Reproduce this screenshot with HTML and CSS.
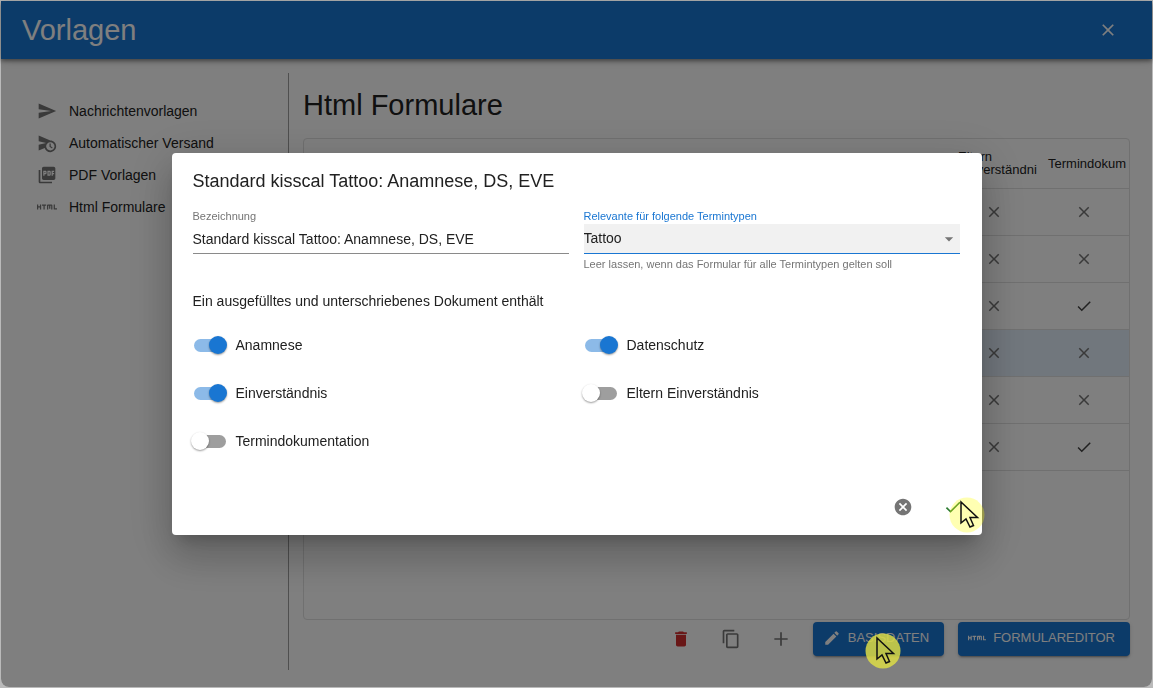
FILE: index.html
```html
<!DOCTYPE html>
<html lang="de">
<head>
<meta charset="utf-8">
<title>Vorlagen</title>
<link rel="stylesheet" href="styles.css">
</head>
<body>
<svg class="defs" aria-hidden="true">
  <symbol id="x" viewBox="0 0 24 24"><path d="M19 6.41 17.59 5 12 10.59 6.41 5 5 6.41 10.59 12 5 17.59 6.41 19 12 13.41 17.59 19 19 17.59 13.41 12z"/></symbol>
  <symbol id="check" viewBox="0 0 24 24"><path d="M9 16.17 4.83 12l-1.42 1.41L9 19 21 7l-1.41-1.41z"/></symbol>
  <symbol id="html" viewBox="0 0 24 24"><path d="M3.500 9H5v6H3.500v-2.500h-2V15H0V9h1.500v2h2V9zm14 0H13c-.55 0-1 .45-1 1v5h1.500v-4.500h1V14H16v-3.510h1V15h1.500v-5c0-.55-.45-1-1-1zM11 9H6v1.500h1.750V15h1.500v-4.500H11V9zm13 6v-1.500h-2.500V9H20v6h4z"/></symbol>
  <symbol id="pointer" viewBox="0 0 36 36"><circle class="halo" cx="18" cy="18" r="17.500"/><path class="arrow" d="M12 5v21l5-4 4 8 3.500-1.500-3.500-8h7.500z"/></symbol>
</svg>

<div class="window">
  <header class="bar">
    <h1 class="bar-title">Vorlagen</h1>
    <button class="icon-btn" aria-label="Schließen"><svg class="icon"><use href="#x"/></svg></button>
  </header>

  <div class="body">
    <nav class="nav">
      <a class="nav-link" href="#"><svg class="icon" viewBox="0 0 24 24"><path d="M2.010 21 23 12 2.010 3 2 10l15 2-15 2z"/></svg>Nachrichtenvorlagen</a>
      <a class="nav-link" href="#"><svg class="icon" viewBox="0 0 24 24"><path d="M16.500 12.500H15v4l3 2 .75-1.230-2.250-1.520V12.500zM16 9 2 3v7l9 2-9 2v7l7.270-3.110C10.090 20.830 12.790 23 16 23c3.860 0 7-3.140 7-7s-3.140-7-7-7zm0 12c-2.750 0-4.980-2.220-5-4.970v-.07c.02-2.740 2.250-4.970 5-4.970 2.760 0 5 2.240 5 5S18.760 21 16 21z"/></svg>Automatischer Versand</a>
      <a class="nav-link" href="#"><svg class="icon" viewBox="0 0 24 24"><path d="M20 2H8c-1.100 0-2 .9-2 2v12c0 1.100.9 2 2 2h12c1.100 0 2-.9 2-2V4c0-1.100-.9-2-2-2zm-8.500 7.500c0 .83-.67 1.500-1.500 1.500H9v2H7.500V7H10c.83 0 1.500.67 1.500 1.500v1zm5 2c0 .83-.67 1.500-1.500 1.500h-2.500V7H15c.83 0 1.500.67 1.500 1.500v3zm4-3H19v1h1.500V11H19v2h-1.500V7h3v1.500zM9 9.500h1v-1H9v1zM4 6H2v14c0 1.100.9 2 2 2h14v-2H4V6zm10 5.500h1v-3h-1v3z"/></svg>PDF Vorlagen</a>
      <a class="nav-link" href="#"><svg class="icon"><use href="#html"/></svg>Html Formulare</a>
    </nav>

    <main class="main">
      <h2 class="heading">Html Formulare</h2>
      <div class="grid">
        <table class="table">
          <colgroup><col><col class="col-flag"><col class="col-flag"></colgroup>
          <thead><tr><td></td><th scope="col">Eltern Einverständni</th><th scope="col">Termindokum</th></tr></thead>
          <tbody>
            <tr><td></td><td><svg class="icon"><use href="#x"/></svg></td><td><svg class="icon"><use href="#x"/></svg></td></tr>
            <tr><td></td><td><svg class="icon"><use href="#x"/></svg></td><td><svg class="icon"><use href="#x"/></svg></td></tr>
            <tr><td></td><td><svg class="icon"><use href="#x"/></svg></td><td><svg class="icon yes"><use href="#check"/></svg></td></tr>
            <tr class="selected"><td></td><td><svg class="icon"><use href="#x"/></svg></td><td><svg class="icon"><use href="#x"/></svg></td></tr>
            <tr><td></td><td><svg class="icon"><use href="#x"/></svg></td><td><svg class="icon"><use href="#x"/></svg></td></tr>
            <tr><td></td><td><svg class="icon"><use href="#x"/></svg></td><td><svg class="icon yes"><use href="#check"/></svg></td></tr>
          </tbody>
        </table>
      </div>
      <div class="actions">
        <button class="icon-btn" aria-label="Löschen"><svg class="icon danger" viewBox="0 0 24 24"><path d="M6 19c0 1.100.9 2 2 2h8c1.100 0 2-.9 2-2V7H6v12zM19 4h-3.500l-1-1h-5l-1 1H5v2h14V4z"/></svg></button>
        <button class="icon-btn" aria-label="Kopieren"><svg class="icon" viewBox="0 0 24 24"><path d="M16 1H4c-1.100 0-2 .9-2 2v14h2V3h12V1zm3 4H8c-1.100 0-2 .9-2 2v14c0 1.100.9 2 2 2h11c1.100 0 2-.9 2-2V7c0-1.100-.9-2-2-2zm0 16H8V7h11v14z"/></svg></button>
        <button class="icon-btn" aria-label="Hinzufügen"><svg class="icon" viewBox="0 0 24 24"><path d="M20 13h-7v7h-2v-7H4v-2h7V4h2v7h7v2z"/></svg></button>
        <button class="btn"><svg class="icon" viewBox="0 0 24 24"><path d="M3 17.250V21h3.750L17.810 9.940l-3.750-3.750L3 17.250zM20.710 7.040c.39-.39.39-1.020 0-1.410l-2.340-2.340a1 1 0 0 0-1.410 0l-1.830 1.830 3.750 3.750 1.830-1.830z"/></svg>BASISDATEN<svg class="pointer solid"><use href="#pointer"/></svg></button>
        <button class="btn"><svg class="icon"><use href="#html"/></svg>FORMULAREDITOR</button>
      </div>
    </main>
  </div>
</div>

<div class="backdrop">
  <form class="dialog" role="dialog" aria-labelledby="dialog-title">
    <h2 class="dialog-title" id="dialog-title">Standard kisscal Tattoo: Anamnese, DS, EVE</h2>
    <div class="columns">
      <div class="field">
        <label class="label" for="name">Bezeichnung</label>
        <input class="control" id="name" type="text" value="Standard kisscal Tattoo: Anamnese, DS, EVE">
      </div>
      <div class="field focused">
        <label class="label" for="type">Relevante für folgende Termintypen</label>
        <div class="select-wrap">
          <select class="control" id="type"><option>Tattoo</option></select>
          <svg class="caret" viewBox="0 0 24 24"><path d="m7 10 5 5 5-5z"/></svg>
        </div>
        <p class="hint">Leer lassen, wenn das Formular für alle Termintypen gelten soll</p>
      </div>
    </div>
    <p class="intro">Ein ausgefülltes und unterschriebenes Dokument enthält</p>
    <div class="columns switches">
      <label class="switch"><input class="toggle" type="checkbox" checked>Anamnese</label>
      <label class="switch"><input class="toggle" type="checkbox" checked>Datenschutz</label>
      <label class="switch"><input class="toggle" type="checkbox" checked>Einverständnis</label>
      <label class="switch"><input class="toggle" type="checkbox">Eltern Einverständnis</label>
      <label class="switch"><input class="toggle" type="checkbox">Termindokumentation</label>
    </div>
    <div class="dialog-actions">
      <button class="icon-btn" type="button" aria-label="Abbrechen"><svg class="icon" viewBox="0 0 24 24"><path d="M12 2C6.470 2 2 6.470 2 12s4.470 10 10 10 10-4.470 10-10S17.530 2 12 2zm5 13.590L15.590 17 12 13.410 8.410 17 7 15.590 10.590 12 7 8.410 8.410 7 12 10.590 15.590 7 17 8.410 13.410 12 17 15.590z"/></svg></button>
      <button class="icon-btn" type="button" aria-label="Speichern"><svg class="icon success"><use href="#check"/></svg><svg class="pointer"><use href="#pointer"/></svg></button>
    </div>
  </form>
</div>
</body>
</html>
```

FILE: styles.css
```css
* { box-sizing: border-box; }

body {
  margin: 0;
  min-height: 100vh;
  display: flex;
  padding: 1px;
  background: #bababa;
  font: 14px/20px "Liberation Sans", Arial, sans-serif;
  color: #212121;
}

h1, h2, p { margin: 0; font-weight: 400; }
button { border: 0; background: none; padding: 0; font: inherit; color: inherit; }

.defs { position: absolute; width: 0; height: 0; }

.icon { width: 20px; height: 20px; flex: none; fill: #757575; }
.icon.danger { fill: #d32f2f; }
.icon.success { fill: #2e7d32; }

.icon-btn { position: relative; display: flex; padding: 8px; }

.window {
  flex: 1;
  display: flex;
  flex-direction: column;
  background: #fff;
  border-radius: 0 0 8px 8px;
}

.bar {
  display: flex;
  align-items: center;
  justify-content: space-between;
  height: 58px;
  padding: 0 26px 0 21px;
  background: #1976d2;
  color: #fff;
  box-shadow: 0 2px 4px rgba(0, 0, 0, .4), 0 1px 10px rgba(0, 0, 0, .2);
}
.bar-title { font-size: 29px; line-height: 34px; }
.bar .icon { fill: #fff; }

.body { flex: 1; display: flex; padding: 14px 22px 17px 0; }

.nav {
  width: 288px;
  padding: 28px 0 0 36px;
  border-right: 1px solid #9e9e9e;
  display: flex;
  flex-direction: column;
  gap: 12px;
}
.nav-link {
  display: flex;
  align-items: center;
  gap: 12px;
  color: #212121;
  text-decoration: none;
}

.main { flex: 1; min-width: 0; display: flex; flex-direction: column; padding: 15px 0 14px 14px; }
.heading { font-size: 29px; line-height: 34px; }

.grid {
  flex: 1;
  margin-top: 16px;
  border: 1px solid #e0e0e0;
  border-radius: 4px;
}
.table { width: 100%; border-collapse: collapse; table-layout: fixed; }
.col-flag { width: 90px; }
.table td, .table th {
  height: 47px;
  padding: 0;
  border-bottom: 1px solid #e0e0e0;
  text-align: center;
  vertical-align: middle;
}
.table thead th, .table thead td {
  height: 49px;
  padding: 0 0 0 9px;
  font-size: 13px;
  line-height: 13px;
  font-weight: 400;
  text-align: left;
}
.table .icon { display: block; width: 18px; height: 18px; margin: 0 auto; }
.table .icon.yes { fill: #424242; }
.selected { background: #e3eefa; }

.actions { display: flex; justify-content: flex-end; align-items: center; gap: 14px; height: 36px; padding-top: 2px; }
.btn {
  position: relative;
  display: flex;
  align-items: center;
  gap: 7px;
  height: 34px;
  padding: 0 15px 2px 10px;
  border-radius: 4px;
  background: #1976d2;
  color: #fff;
  font-size: 13px;
  box-shadow: 0 3px 1px -2px rgba(0, 0, 0, .2), 0 2px 2px rgba(0, 0, 0, .14), 0 1px 5px rgba(0, 0, 0, .12);
}
.btn .icon { width: 18px; height: 18px; fill: #fff; }

/* Click highlight drawn above the backdrop */
.pointer {
  position: absolute;
  z-index: 20;
  left: 14px;
  top: 8px;
  width: 36px;
  height: 36px;
  fill: rgba(255, 255, 0, .3);
}
.pointer.solid { left: 52px; top: 11px; fill: rgba(220, 220, 70, .85); }
.arrow { fill: none; stroke: #111; stroke-width: 1.5; }

.backdrop {
  position: fixed;
  z-index: 10;
  inset: 1px;
  border-radius: 0 0 8px 8px;
  display: flex;
  align-items: center;
  justify-content: center;
  background: rgba(0, 0, 0, .5);
}

.dialog {
  width: 100%;
  max-width: 810px;
  padding: 18px 22px 10px 21px;
  border-radius: 4px;
  background: #fff;
  box-shadow: 0 11px 15px -7px rgba(0, 0, 0, .2), 0 24px 38px 3px rgba(0, 0, 0, .14), 0 9px 46px 8px rgba(0, 0, 0, .12);
}
.dialog-title { font-size: 18px; line-height: 20px; }
.columns { display: grid; grid-template-columns: 1fr 1fr; column-gap: 15px; }

.field { padding-top: 17px; }
.label { display: block; font-size: 11px; line-height: 16px; color: #757575; }
.focused .label { color: #1976d2; }
.control {
  display: block;
  width: 100%;
  height: 30px;
  padding: 0;
  border: 0;
  border-bottom: 1px solid #8a8a8a;
  border-radius: 0;
  outline: 0;
  background: none;
  font: inherit;
  color: inherit;
  appearance: none;
}
.focused .control { padding-bottom: 2px; background: #f1f1f1; border-color: #1976d2; }
.select-wrap { position: relative; }
.caret { position: absolute; right: 1px; top: 5px; width: 20px; height: 20px; fill: #757575; pointer-events: none; }
.hint { font-size: 11px; line-height: 20px; color: #757575; }

.intro { margin-top: 17px; }

.switches { row-gap: 28px; margin-top: 24px; }
.switch { display: flex; align-items: center; gap: 10px; padding-left: 1px; }
.toggle {
  appearance: none;
  position: relative;
  width: 32px;
  height: 13px;
  margin: 0;
  border-radius: 7px;
  background: #9e9e9e;
}
.toggle::after {
  content: "";
  position: absolute;
  left: -3px;
  top: -3px;
  width: 18px;
  height: 18px;
  border-radius: 50%;
  background: #fff;
  box-shadow: 0 1px 2px rgba(0, 0, 0, .4);
}
.toggle:checked { background: #8cbae8; }
.toggle:checked::after { left: 15px; background: #1976d2; }

.dialog-actions { display: flex; justify-content: flex-end; gap: 14px; margin: 38px -11px 0 0; }
```
